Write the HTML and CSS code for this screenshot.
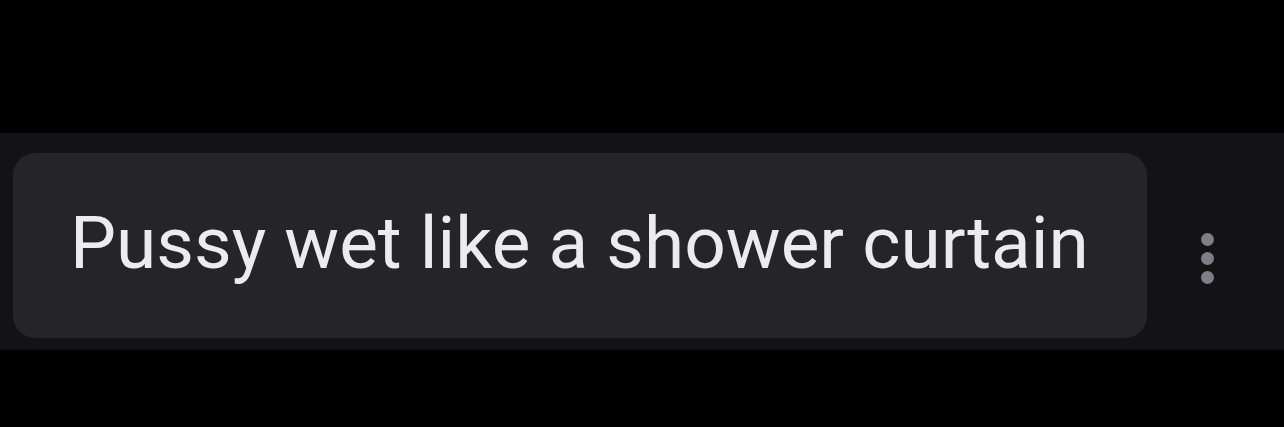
FILE: index.html
```html
<!DOCTYPE html>
<html lang="en">
<head>
    <meta charset="UTF-8">
    <title>Message</title>
    <link rel="stylesheet" href="styles.css">
</head>
<body>
    <div class="chat-row">
        <div class="bubble">Pussy wet like a shower curtain</div>
        <div class="more" aria-label="More options">
            <span class="dot"></span>
            <span class="dot"></span>
            <span class="dot"></span>
        </div>
    </div>
</body>
</html>
```

FILE: styles.css
```css
* {
    margin: 0;
    padding: 0;
    box-sizing: border-box;
}

body {
    background: #000;
    font-family: Roboto, 'Liberation Sans', Arial, sans-serif;
    height: 427px;
    padding-top: 133px;
}

.chat-row {
    background: #131316;
    height: 217px;
    display: flex;
    align-items: flex-start;
    padding: 20px 0 0 13px;
}

.bubble {
    background: #242429;
    width: 1134px;
    height: 185px;
    border-radius: 22px;
    color: #ececee;
    font-size: 73px;
    padding: 47px 0 0 57px;
    white-space: nowrap;
}

.more {
    display: flex;
    flex-direction: column;
    gap: 6px;
    margin: 80px 0 0 54px;
}

.dot {
    width: 13px;
    height: 13px;
    border-radius: 50%;
    background: #7e7e87;
}
```
